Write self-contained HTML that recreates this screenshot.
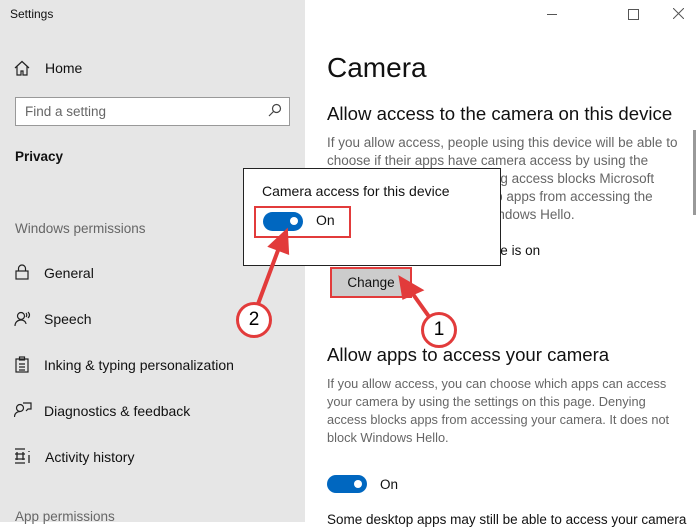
<!DOCTYPE html>
<html><head><style>
body{margin:0;width:698px;height:522px;overflow:hidden;font-family:"Liberation Sans",sans-serif;background:#fff;position:relative}
.a{position:absolute;white-space:nowrap}
.side{position:absolute;left:0;top:0;width:305px;height:522px;background:#e6e6e6}
.nav{font-size:14px;color:#111}
.g{color:#666;font-size:13.5px;line-height:18px}
.tg{position:absolute;width:40px;height:18px;border-radius:10px;background:#0067c0}
.tg::after{content:"";position:absolute;right:5px;top:5px;width:8px;height:8px;border-radius:50%;background:#fff}
.c{position:absolute;width:30px;height:30px;border-radius:50%;background:#fff;border:3px solid #e23b3b;font-size:19px;text-align:center;line-height:30px;color:#000}
</style></head><body>
<div class="side"></div>
<div class="a" style="left:10px;top:7px;font-size:12px;color:#111">Settings</div>
<svg class="a" style="left:14px;top:60px" width="16" height="16" viewBox="0 0 16 16" fill="none" stroke="#222" stroke-width="1.2"><path d="M1 8L8 1.5 15 8M3 6.5V15h4v-4h2v4h4V6.5"/></svg>
<div class="a nav" style="left:45px;top:60px">Home</div>
<div class="a" style="left:15px;top:97px;width:273px;height:27px;background:#fff;border:1px solid #999"></div>
<div class="a" style="left:25px;top:104px;font-size:13.5px;color:#666">Find a setting</div>
<svg class="a" style="left:268px;top:103px" width="14" height="14" viewBox="0 0 14 14" fill="none" stroke="#444" stroke-width="1.2"><circle cx="8.5" cy="5.5" r="4"/><path d="M5.5 8.5L1 13"/></svg>
<div class="a" style="left:15px;top:149px;font-size:13.5px;font-weight:bold;color:#111">Privacy</div>
<div class="a" style="left:15px;top:221px;font-size:13.5px;color:#666">Windows permissions</div>
<svg class="a" style="left:15px;top:264px" width="14" height="16" viewBox="0 0 14 16" fill="none" stroke="#222" stroke-width="1.2"><rect x="1" y="7" width="12" height="8"/><path d="M3.5 7V4.5a3.5 3.5 0 017 0V7"/></svg>
<div class="a nav" style="left:44px;top:265px">General</div>
<svg class="a" style="left:14px;top:311px" width="18" height="16" viewBox="0 0 18 16" fill="none" stroke="#222" stroke-width="1.2"><circle cx="7" cy="5" r="3.5"/><path d="M1 15c0-4 3-6 6-6s5 2 5 4M12 2c1 1 1 3 0 4M14 1c2 2 2 4 0 6"/></svg>
<div class="a nav" style="left:44px;top:311px">Speech</div>
<svg class="a" style="left:15px;top:356px" width="14" height="17" viewBox="0 0 14 17" fill="none" stroke="#222" stroke-width="1.2"><rect x="1" y="3" width="12" height="13"/><rect x="4.5" y="1" width="5" height="3"/><path d="M4 8h6M4 11h6M4 14h6"/></svg>
<div class="a nav" style="left:44px;top:357px">Inking &amp; typing personalization</div>
<svg class="a" style="left:14px;top:402px" width="18" height="16" viewBox="0 0 18 16" fill="none" stroke="#222" stroke-width="1.2"><circle cx="6" cy="6" r="3.5"/><path d="M0.5 15c0-4 3-5.5 5.5-5.5M9 1h8v6h-3l-2 2"/></svg>
<div class="a nav" style="left:44px;top:403px">Diagnostics &amp; feedback</div>
<svg class="a" style="left:14px;top:448px" width="18" height="16" viewBox="0 0 18 16" fill="none" stroke="#222" stroke-width="1.3"><path d="M1 1h10M1 15h10M3 4v8M9 4v8M1 6h10M1 11h10M15 3v1M15 7v8"/></svg>
<div class="a nav" style="left:45px;top:449px">Activity history</div>
<div class="a" style="left:15px;top:509px;font-size:13.5px;color:#666">App permissions</div>

<div class="a" style="left:547px;top:14px;width:10px;border-top:1px solid #555"></div>
<div class="a" style="left:628px;top:9px;width:9px;height:9px;border:1px solid #555"></div>
<svg class="a" style="left:673px;top:8px" width="11" height="11"><path d="M0 0L11 11M11 0L0 11" stroke="#555"/></svg>
<div class="a" style="left:693px;top:130px;width:3px;height:85px;background:#999"></div>

<div class="a" style="left:327px;top:52px;font-size:28px;color:#111">Camera</div>
<div class="a" style="left:327px;top:103px;font-size:18.6px;color:#111">Allow access to the camera on this device</div>
<div class="a g" style="left:327px;top:134px">If you allow access, people using this device will be able to<br>choose if their apps have camera access by using the<br>settings on this page. Denying access blocks Microsoft<br>Store apps and most desktop apps from accessing the<br>camera. It does not block Windows Hello.</div>
<div class="a" style="left:327px;top:243px;font-size:13.5px;color:#111">Camera access for this device is on</div>
<div class="a" style="left:330px;top:267px;width:78px;height:27px;background:#ccc;border:2px solid #e23b3b;font-size:13.5px;text-align:center;line-height:27px;color:#111">Change</div>
<div class="a" style="left:327px;top:344px;font-size:18.6px;color:#111">Allow apps to access your camera</div>
<div class="a g" style="left:327px;top:375px;font-size:12.8px">If you allow access, you can choose which apps can access<br>your camera by using the settings on this page. Denying<br>access blocks apps from accessing your camera. It does not<br>block Windows Hello.</div>
<div class="tg" style="left:327px;top:475px"></div>
<div class="a" style="left:380px;top:477px;font-size:13.5px;color:#111">On</div>
<div class="a" style="left:327px;top:512px;font-size:13.5px;color:#111">Some desktop apps may still be able to access your camera</div>

<div class="a" style="left:243px;top:168px;width:256px;height:96px;background:#fff;border:1px solid #222"></div>
<div class="a" style="left:262px;top:183px;font-size:14px;color:#111">Camera access for this device</div>
<div class="a" style="left:254px;top:206px;width:93px;height:28px;border:2px solid #e23b3b"></div>
<div class="tg" style="left:263px;top:212px;height:19px"></div>
<div class="a" style="left:316px;top:212px;font-size:14px;color:#111">On</div>

<svg class="a" style="left:0;top:0" width="698" height="522"><g stroke="#e23b3b" stroke-width="4" fill="#e23b3b" stroke-linecap="round"><line x1="430" y1="318" x2="410" y2="290"/><path d="M401 279L420 290L404 297Z"/><line x1="258" y1="304" x2="280" y2="245"/><path d="M286 232L287 252L271 246Z"/></g></svg>
<div class="c" style="left:421px;top:312px">1</div>
<div class="c" style="left:236px;top:302px">2</div>
</body></html>
